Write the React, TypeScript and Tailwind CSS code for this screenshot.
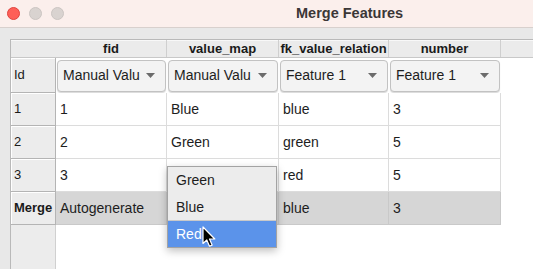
import React from 'react';

const columns = [
  { name: 'fid', width: 'w-[111px]', editor: 'Manual Valu' },
  { name: 'value_map', width: 'w-[112px]', editor: 'Manual Valu' },
  { name: 'fk_value_relation', width: 'w-[110px]', editor: 'Feature 1' },
  { name: 'number', width: 'w-[112px]', editor: 'Feature 1' },
];

const rows = [
  { label: '1', cells: ['1', 'Blue', 'blue', '3'] },
  { label: '2', cells: ['2', 'Green', 'green', '5'] },
  { label: '3', cells: ['3', '', 'red', '5'] },
];

const mergeRow = ['Autogenerate', '', 'blue', '3'];

// Raised header cell used on the left side of the grid
function RowHeader({ label, bold }: { label: string; bold?: boolean }) {
  return (
    <div className="w-[45px] shrink-0 flex items-center pl-[3px] bg-[#ececec] border-r border-b border-[#b4b4b4] shadow-[inset_1px_1px_0_#ffffff]">
      <span className={bold ? 'text-[13px] font-bold text-[#1a1a1a]' : 'text-[13px] text-[#1a1a1a]'}>{label}</span>
    </div>
  );
}

function Combo({ text }: { text: string }) {
  return (
    <div className="flex-1 h-[32px] mx-[1px] flex items-center justify-between pl-[5px] pr-[10px] rounded-[4px] border border-[#c2c2c2] bg-[#f3f3f3] shadow-[0_1px_1px_rgba(0,0,0,0.15)]">
      <span className="text-[14px] text-[#1d1d1d] whitespace-nowrap overflow-hidden">{text}</span>
      <svg width="9" height="5" viewBox="0 0 9 5" className="shrink-0">
        <path d="M0 0 L9 0 L4.5 5 Z" fill="#6b6b6b" />
      </svg>
    </div>
  );
}

function Cursor() {
  return (
    <svg width="15" height="22" viewBox="0 0 15 22" className="absolute left-[202px] top-[226px]">
      <path
        d="M1 1 L1 17.5 L4.8 14 L7.5 20.2 L10.1 19.1 L7.5 13 L12.8 13 Z"
        fill="#000000"
        stroke="#ffffff"
        strokeWidth="1.2"
        strokeLinejoin="round"
      />
    </svg>
  );
}

export default function App() {
  return (
    <div
      className="relative w-[533px] h-[269px] overflow-hidden bg-[#e8e8e8] flex flex-col"
      style={{ fontFamily: '"Liberation Sans", Arial, sans-serif' }}
    >
      {/* Title bar */}
      <div className="h-[28px] shrink-0 bg-[#fbefec] border-b border-[#d8d0cd] flex items-center">
        <div className="flex items-center gap-[9px] pl-[7px]">
          <div className="w-[13px] h-[13px] rounded-full bg-[#fe5f57] border border-[#e0443e]" />
          <div className="w-[13px] h-[13px] rounded-full bg-[#d9d3d0] border border-[#cbc5c2]" />
          <div className="w-[13px] h-[13px] rounded-full bg-[#d9d3d0] border border-[#cbc5c2]" />
        </div>
        <div className="ml-[232px] text-[14.5px] font-bold text-[#3b3737]">Merge Features</div>
      </div>

      {/* Table */}
      <div className="flex-1 pt-[11px] pl-[10px] flex flex-col">
        <div className="flex-1 flex flex-col border-l border-t border-[#b9b9b9]">
          {/* Column headers */}
          <div className="h-[18px] shrink-0 flex bg-[#ebebeb] border-b border-[#c8c8c8] shadow-[inset_0_1px_0_#f8f8f8]">
            <div className="w-[45px] shrink-0" />
            {columns.map((c) => (
              <div
                key={c.name}
                className={`${c.width} shrink-0 flex items-center justify-center border-r border-[#cfcfcf] text-[13px] font-bold text-[#1a1a1a] whitespace-nowrap overflow-hidden`}
              >
                {c.name}
              </div>
            ))}
            <div className="flex-1" />
          </div>

          {/* Editor row */}
          <div className="h-[35px] shrink-0 flex">
            <RowHeader label="Id" />
            {columns.map((c) => (
              <div key={c.name} className={`${c.width} shrink-0 flex items-center bg-white`}>
                <Combo text={c.editor} />
              </div>
            ))}
            <div className="flex-1 bg-white" />
          </div>

          {/* Data rows */}
          {rows.map((r) => (
            <div key={r.label} className="h-[33px] shrink-0 flex">
              <RowHeader label={r.label} />
              {r.cells.map((v, i) => (
                <div
                  key={i}
                  className={`${columns[i].width} shrink-0 flex items-center pl-[4px] bg-white border-r border-b border-[#dcdcdc] text-[14px] text-[#1d1d1d]`}
                >
                  {v}
                </div>
              ))}
              <div className="flex-1 bg-white" />
            </div>
          ))}

          {/* Merge row */}
          <div className="h-[33px] shrink-0 flex">
            <RowHeader label="Merge" bold />
            {mergeRow.map((v, i) => (
              <div
                key={i}
                className={`${columns[i].width} shrink-0 flex items-center pl-[4px] bg-[#d6d6d6] border-r border-b border-[#c9c9c9] text-[14px] text-[#1d1d1d]`}
              >
                {v}
              </div>
            ))}
            <div className="flex-1 bg-white" />
          </div>

          {/* Empty area */}
          <div className="flex-1 flex">
            <div className="w-[45px] shrink-0 bg-[#ececec] border-r border-[#d0d0d0]" />
            <div className="flex-1 bg-white" />
          </div>
        </div>
      </div>

      {/* Open dropdown list */}
      <div className="absolute left-[167px] top-[166px] w-[110px] flex flex-col bg-[#ececec] border border-[#a3a3a3] shadow-[0_3px_8px_rgba(0,0,0,0.25)]">
        <div className="h-[27px] flex items-center pl-[8px] text-[14px] text-[#1d1d1d]">Green</div>
        <div className="h-[27px] flex items-center pl-[8px] text-[14px] text-[#1d1d1d] border-b border-[#c9c9c9]">Blue</div>
        <div className="h-[26px] flex items-center pl-[8px] text-[14px] text-white bg-[#5b93ea]">Red</div>
      </div>
      <Cursor />
    </div>
  );
}
